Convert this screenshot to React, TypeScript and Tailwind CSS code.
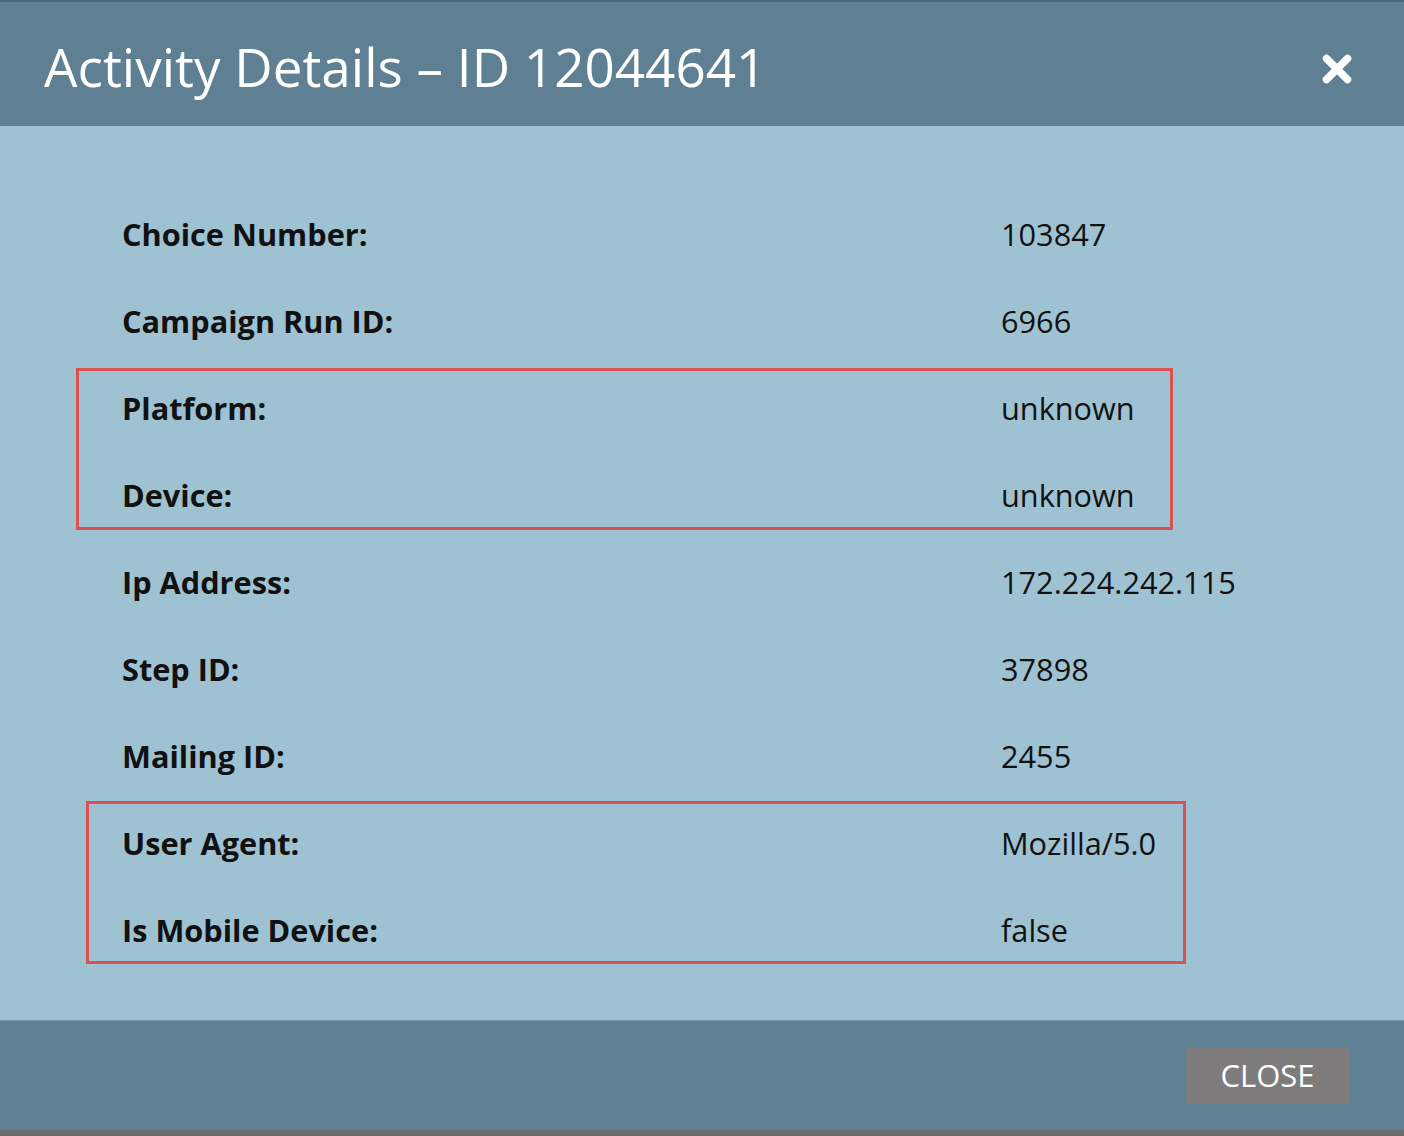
import React from "react";

const rows = [
    {label: "Choice Number:", value: "103847"},
    {label: "Campaign Run ID:", value: "6966"},
    {label: "Platform:", value: "unknown"},
    {label: "Device:", value: "unknown"},
    {label: "Ip Address:", value: "172.224.242.115"},
    {label: "Step ID:", value: "37898"},
    {label: "Mailing ID:", value: "2455"},
    {label: "User Agent:", value: "Mozilla/5.0"},
    {label: "Is Mobile Device:", value: "false"},
];

const CloseIcon = () => (
    <svg width="36" height="36" viewBox="0 0 36 36">
        <path d="M7.5 7.5 L28.5 28.5 M28.5 7.5 L7.5 28.5" stroke="white" strokeWidth="7.5" strokeLinecap="round"/>
    </svg>
);

export default function App() {
    return (
        <div className="w-[1404px] h-[1136px] flex flex-col bg-[#9fc2d3] text-[#111]"
             style={{fontFamily: '"Open Sans", sans-serif'}}>
            <div className="h-[126px] shrink-0 bg-[#5f7f93] border-t-2 border-[#4d6678] flex items-center justify-between pl-[44px] pr-[49px]">
                <h1 className="text-[53px] leading-none text-white font-normal pt-[4px]">Activity Details – ID 12044641</h1>
                <button className="flex items-center justify-center pt-[10px]">
                    <CloseIcon/>
                </button>
            </div>

            <div className="flex-1 pt-[65px]">
                <div className="relative">
                    {rows.map((row, index) => (
                        <div key={index} className="grid grid-cols-[879px_1fr] pl-[122px] h-[87px] items-center text-[30.7px] leading-[87px]">
                            <span className="font-bold">{row.label}</span>
                            <span>{row.value}</span>
                        </div>
                    ))}
                    <div className="absolute left-[76px] top-[177px] w-[1097px] h-[162px] border-[3px] border-[#dc5050]"/>
                    <div className="absolute left-[86px] top-[610px] w-[1100px] h-[163px] border-[3px] border-[#dc5050]"/>
                </div>
            </div>

            <div className="h-[110px] shrink-0 bg-[#5f7f93] border-t border-[#7398ab] flex items-center justify-end pr-[54px]">
                <button className="w-[165px] h-[56px] bg-[#7e7b7c] text-white text-[31px] leading-none flex items-center justify-center">
                    CLOSE
                </button>
            </div>
            <div className="h-[6px] shrink-0 bg-[#6b6b6b]"/>
        </div>
    );
}
